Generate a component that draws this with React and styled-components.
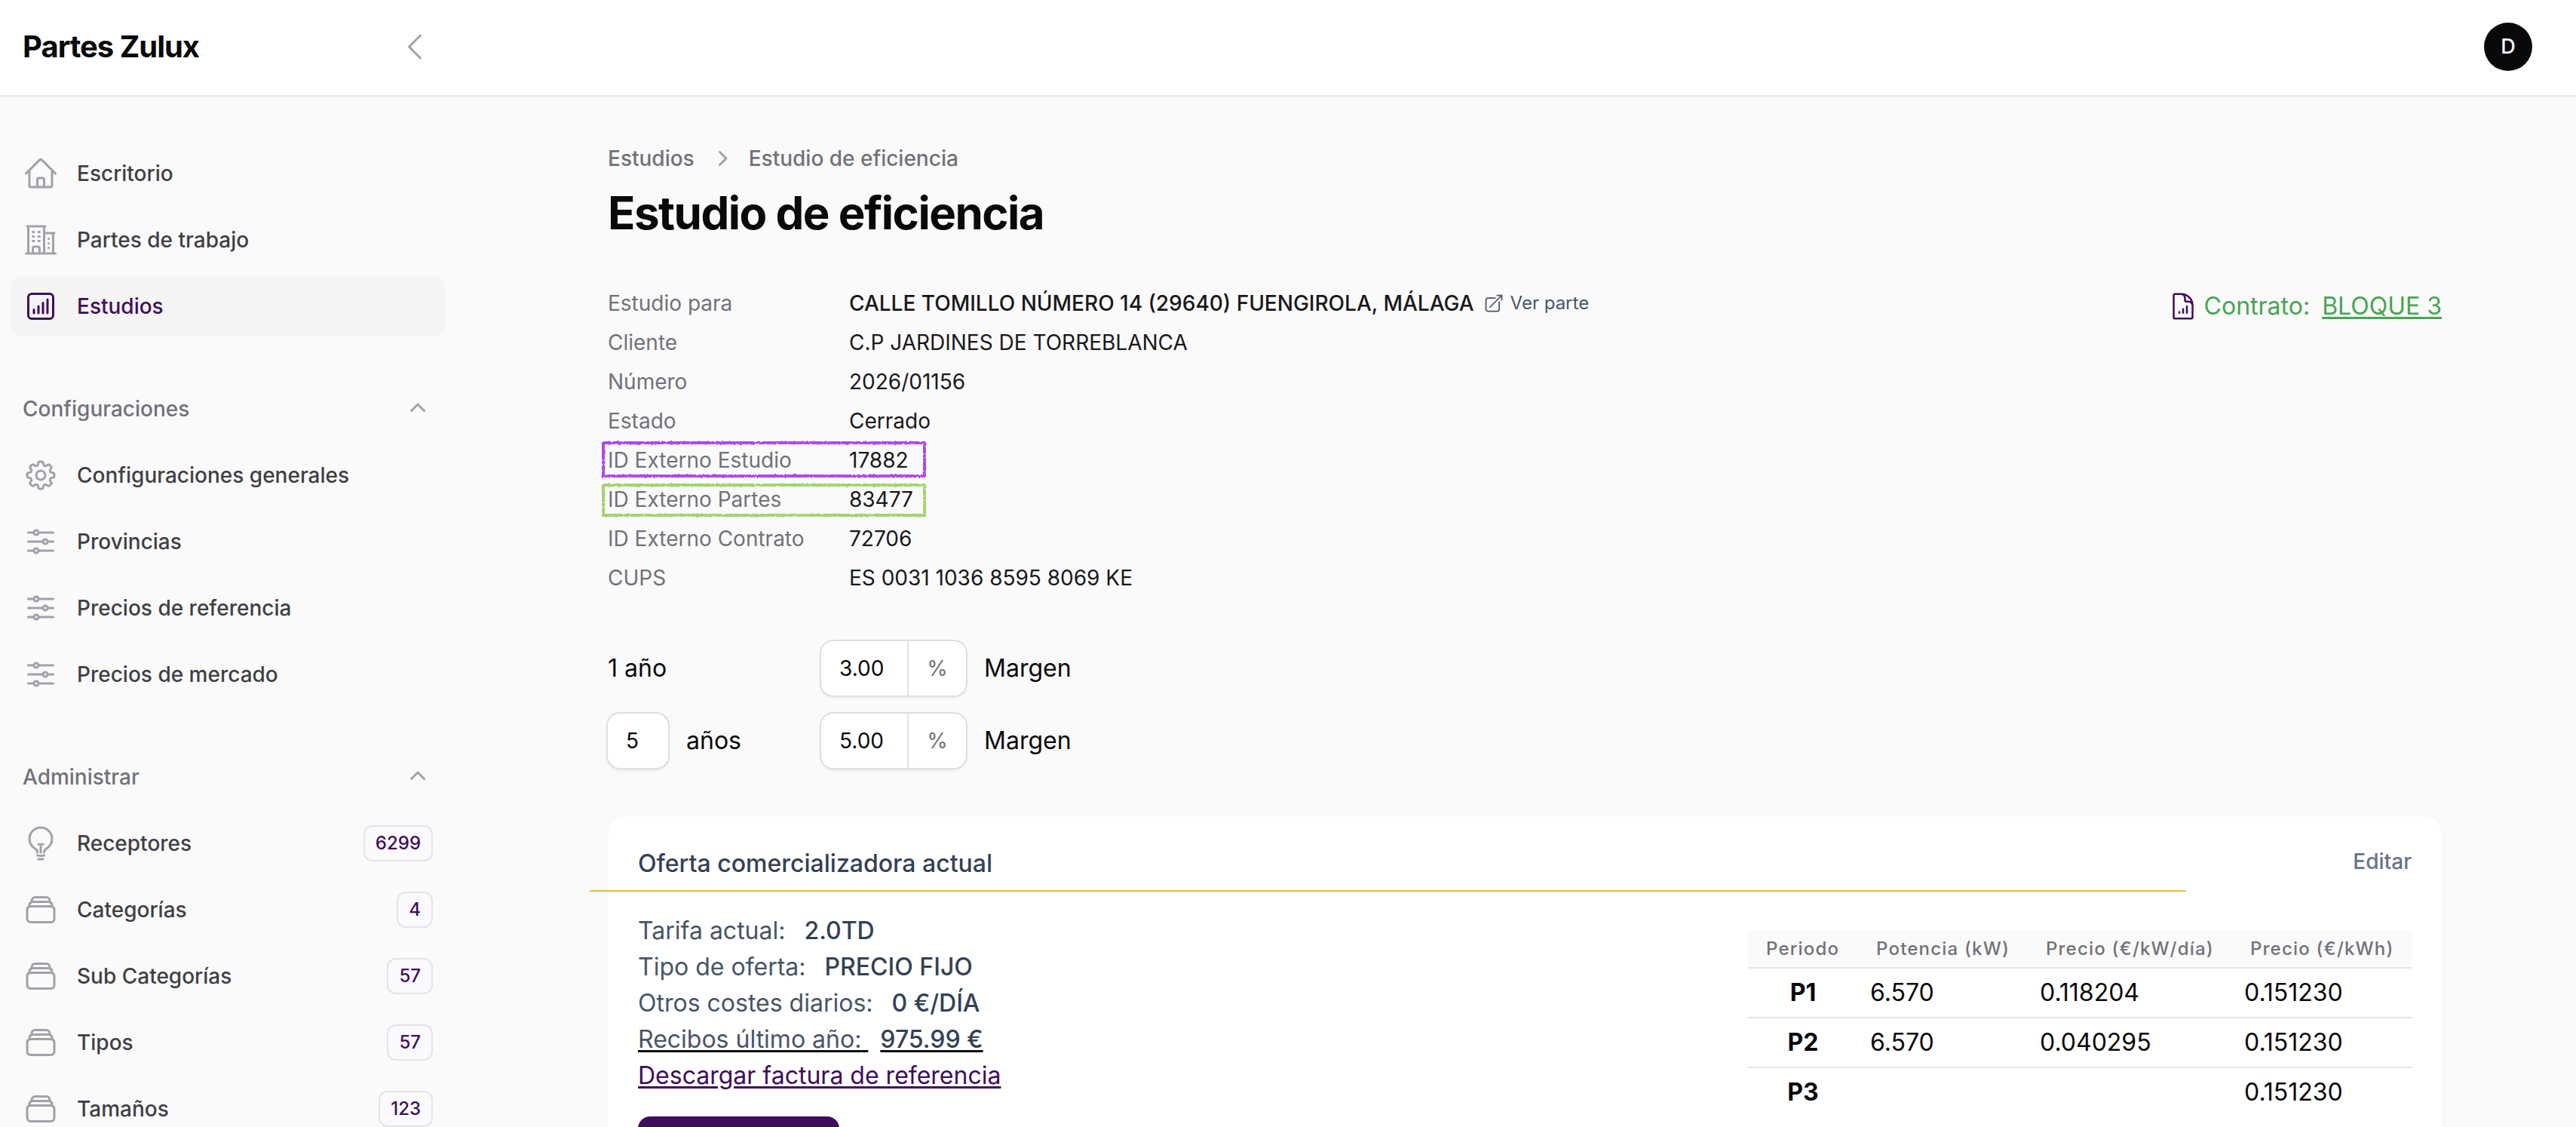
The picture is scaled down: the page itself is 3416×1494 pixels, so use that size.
import React from "react"
import styled, { createGlobalStyle } from "styled-components"
import {
    HiOutlineHome,
    HiOutlineBuildingOffice2,
    HiOutlineChartBarSquare,
    HiOutlineCog8Tooth,
    HiOutlineAdjustmentsHorizontal,
    HiOutlineLightBulb,
    HiOutlineRectangleStack,
    HiOutlineDocumentChartBar,
    HiOutlineArrowTopRightOnSquare,
    HiOutlineChevronLeft,
    HiMiniChevronUp,
    HiMiniChevronRight,
} from "react-icons/hi2"

const GlobalStyle = createGlobalStyle`
    * {
        box-sizing: border-box;
    }

    body {
        margin: 0;
        background: #fafafa;
        color: #09090b;
        font-family: Inter, "Liberation Sans", sans-serif;
        font-size: 32px;
        line-height: 48px;
        overflow: hidden;
    }
`;

const Page = styled.div`
    display: flex;
    flex-direction: column;
    height: 1494px;
    overflow: hidden;
`;

const Topbar = styled.header`
    position: relative;
    display: flex;
    flex: none;
    align-items: center;
    justify-content: space-between;
    height: 126px;
    padding: 0 58px 2px 30px;
    background: #fff;
    box-shadow: 0 0 0 2px #e4e4e5, 0 2px 6px rgba(0, 0, 0, 0.05);
`;

const Brand = styled.div`
    display: flex;
    align-items: center;
    justify-content: space-between;
    width: 544px;
    font-size: 40px;
    font-weight: 700;
    line-height: 40px;
    letter-spacing: -1px;
`;

const CollapseIcon = styled(HiOutlineChevronLeft)`
    width: 48px;
    height: 48px;
    color: #a1a1aa;
`;

const Avatar = styled.div`
    display: flex;
    align-items: center;
    justify-content: center;
    width: 64px;
    height: 64px;
    border-radius: 50%;
    background: #09090b;
    color: #fff;
    font-size: 27px;
    font-weight: 500;
`;

const Body = styled.div`
    display: flex;
    flex: 1;
    min-height: 0;
`;

const Sidebar = styled.nav`
    display: flex;
    flex: none;
    flex-direction: column;
    gap: 56px;
    width: 640px;
    padding: 64px 50px 0 14px;
`;

const Group = styled.div`
    display: flex;
    flex-direction: column;
    gap: 8px;
`;

const GroupHeader = styled.div`
    display: flex;
    align-items: center;
    justify-content: space-between;
    height: 80px;
    padding: 0 16px;
    color: #71717a;
    font-size: 28px;
    font-weight: 500;
`;

const GroupIcon = styled(HiMiniChevronUp)`
    width: 40px;
    height: 40px;
    color: #a1a1aa;
`;

const Item = styled.a`
    display: flex;
    align-items: center;
    gap: 24px;
    height: 80px;
    padding: 0 16px;
    border-radius: 16px;
    background: ${props => props.$active ? "#f4f4f5" : "transparent"};
    color: ${props => props.$active ? "#3f0d5c" : "#3f3f46"};
    font-size: 28px;
    font-weight: 500;

    svg {
        flex: none;
        width: 48px;
        height: 48px;
        color: ${props => props.$active ? "#3f0d5c" : "#a1a1aa"};
    }
`;

const ItemLabel = styled.span`
    flex: 1;
`;

const Badge = styled.span`
    min-width: 48px;
    padding: 8px 16px;
    border-radius: 12px;
    background: #faf9fb;
    box-shadow: inset 0 0 0 2px #e7e1ea;
    color: #3f0d5c;
    font-size: 24px;
    line-height: 32px;
    text-align: center;
`;

const Main = styled.main`
    flex: none;
    width: 2432px;
    margin-left: 166px;
    padding-top: 64px;
`;

const Breadcrumbs = styled.div`
    display: flex;
    align-items: center;
    gap: 16px;
    height: 40px;
    color: #71717a;
    font-size: 28px;
    font-weight: 500;

    svg {
        width: 40px;
        height: 40px;
        color: #a1a1aa;
    }
`;

const Title = styled.h1`
    margin: 16px 0 0;
    font-size: 60px;
    font-weight: 700;
    line-height: 72px;
    letter-spacing: -1.5px;
`;

const Summary = styled.section`
    display: flex;
    justify-content: space-between;
    margin-top: 58px;
`;

const Details = styled.dl`
    margin: 0;
`;

const Detail = styled.div`
    position: relative;
    display: flex;
    align-items: center;
    height: 52px;
    font-size: 28px;
    line-height: 40px;
`;

const Term = styled.dt`
    width: 320px;
    color: #71717a;
`;

const Value = styled.dd`
    margin: 0;
    color: #18181b;
    font-weight: ${props => props.$strong ? 500 : 400};
`;

const ViewLink = styled.a`
    display: flex;
    align-items: center;
    gap: 8px;
    margin-left: 12px;
    color: #475569;
    font-size: 24px;

    svg {
        width: 28px;
        height: 28px;
    }
`;

const MarkerFrame = styled.svg`
    position: absolute;
    top: ${props => props.$top}px;
    left: -8px;
    overflow: visible;
`;

const Contract = styled.div`
    display: flex;
    align-items: center;
    height: 48px;
    margin-top: 6px;
    color: #48a452;

    svg {
        width: 40px;
        height: 40px;
        margin-right: 8px;
        color: #3f0d5c;
    }
`;

const ContractLink = styled.a`
    margin-left: 16px;
    text-decoration: underline 3px;
    text-underline-offset: 3px;
`;

const Margins = styled.section`
    display: flex;
    flex-direction: column;
    gap: 20px;
    margin-top: 56px;
`;

const MarginRow = styled.div`
    display: flex;
    align-items: center;
    height: 76px;
`;

const Years = styled.div`
    display: flex;
    align-items: center;
    gap: 24px;
    width: 283px;
`;

const Field = styled.div`
    display: flex;
    width: ${props => props.$width}px;
    height: 72px;
    border-radius: 16px;
    background: #fff;
    box-shadow: 0 0 0 2px #dfdfe0, 0 3px 5px rgba(0, 0, 0, 0.08);
    font-size: 28px;
    line-height: 72px;
`;

const FieldValue = styled.span`
    flex: 1;
    padding-left: 24px;
`;

const FieldSuffix = styled.span`
    width: 78px;
    border-left: 2px solid #e4e4e7;
    color: #71717a;
    text-align: center;
`;

const MarginLabel = styled.span`
    margin-left: 24px;
`;

const Card = styled.section`
    height: 560px;
    margin-top: 62px;
    padding: 44px 40px;
    border-radius: 24px;
    background: #fff;
    box-shadow: 0 0 2px rgba(0, 0, 0, 0.05);
`;

const CardHeader = styled.div`
    display: flex;
    justify-content: space-between;
    height: 56px;
`;

const CardTitle = styled.h2`
    margin: 0;
    width: 2117px;
    margin-left: -64px;
    padding-left: 64px;
    border-bottom: 2px solid #f0b440;
    color: #334155;
    font-size: 32px;
    font-weight: 500;
    line-height: 38px;
`;

const EditLink = styled.a`
    color: #64748b;
    font-size: 28px;
    font-weight: 500;
    line-height: 32px;
`;

const CardBody = styled.div`
    display: flex;
    justify-content: space-between;
    margin-top: 28px;
`;

const OfferLine = styled.div`
    color: #475569;
    white-space: pre;
    text-decoration: ${props => props.$underline ? "underline 3px #09090b" : "none"};
    text-underline-offset: 3px;
`;

const OfferValue = styled.span`
    display: inline-block;
    margin-left: 16px;
    color: #334155;
    font-weight: 500;
    text-decoration: inherit;
`;

const DownloadLink = styled.a`
    color: #3f0d5c;
    text-decoration: underline 3px;
    text-underline-offset: 3px;
`;

const PrimaryButton = styled.div`
    width: 267px;
    height: 72px;
    margin-top: 30px;
    border-radius: 16px;
    background: #3f0d5c;
`;

const Prices = styled.table`
    width: 880px;
    height: max-content;
    margin-top: 24px;
    border-collapse: separate;
    border-spacing: 0;
    table-layout: fixed;
`;

const HeadCell = styled.th`
    width: ${props => props.$width}px;
    height: 50px;
    padding: 0 0 0 24px;
    border-bottom: 2px solid #e4e4e5;
    background: #fafafa;
    color: #71717a;
    font-size: 24px;
    font-weight: 500;
    line-height: 46px;
    letter-spacing: 1.2px;
    text-align: left;
    white-space: nowrap;
`;

const Cell = styled.td`
    height: 66px;
    padding: 0 0 0 16px;
    border-bottom: 2px solid #e4e4e5;
    line-height: 64px;

    tr:last-child > & {
        border-bottom-color: transparent;
    }
`;

const PeriodCell = styled(Cell)`
    padding: 0;
    font-weight: 700;
    text-align: center;
`;

const menu = [
    {
        items: [
            { icon: HiOutlineHome, label: "Escritorio" },
            { icon: HiOutlineBuildingOffice2, label: "Partes de trabajo" },
            { icon: HiOutlineChartBarSquare, label: "Estudios", active: true },
        ],
    },
    {
        title: "Configuraciones",
        items: [
            { icon: HiOutlineCog8Tooth, label: "Configuraciones generales" },
            { icon: HiOutlineAdjustmentsHorizontal, label: "Provincias" },
            { icon: HiOutlineAdjustmentsHorizontal, label: "Precios de referencia" },
            { icon: HiOutlineAdjustmentsHorizontal, label: "Precios de mercado" },
        ],
    },
    {
        title: "Administrar",
        items: [
            { icon: HiOutlineLightBulb, label: "Receptores", badge: 6299 },
            { icon: HiOutlineRectangleStack, label: "Categorías", badge: 4 },
            { icon: HiOutlineRectangleStack, label: "Sub Categorías", badge: 57 },
            { icon: HiOutlineRectangleStack, label: "Tipos", badge: 57 },
            { icon: HiOutlineRectangleStack, label: "Tamaños", badge: 123 },
        ],
    },
];

const details = [
    { term: "Estudio para", value: "CALLE TOMILLO NÚMERO 14 (29640) FUENGIROLA, MÁLAGA", strong: true, link: "Ver parte" },
    { term: "Cliente", value: "C.P JARDINES DE TORREBLANCA" },
    { term: "Número", value: "2026/01156" },
    { term: "Estado", value: "Cerrado" },
    { term: "ID Externo Estudio", value: "17882", marker: { id: "study", color: "#b04af0", top: 1, height: 48 } },
    { term: "ID Externo Partes", value: "83477", marker: { id: "parts", color: "#a3d470", top: 5, height: 44 } },
    { term: "ID Externo Contrato", value: "72706" },
    { term: "CUPS", value: "ES 0031 1036 8595 8069 KE" },
];

const offer = [
    { label: "Tarifa actual:", value: "2.0TD" },
    { label: "Tipo de oferta:", value: "PRECIO FIJO" },
    { label: "Otros costes diarios:", value: "0 €/DÍA" },
    { label: "Recibos último año:", value: "975.99 €", underline: true },
];

const prices = [
    ["P1", "6.570", "0.118204", "0.151230"],
    ["P2", "6.570", "0.040295", "0.151230"],
    ["P3", "", "", "0.151230"],
];

// crayon-like frame around a detail row
const Marker = ({ id, color, top, height }) => (
    <MarkerFrame $top={top} width="430" height={height}>
        <filter id={id} filterUnits="userSpaceOnUse" x="-6" y="-6" width="442" height={height + 12}>
            <feTurbulence type="fractalNoise" baseFrequency="0.35" numOctaves="2" />
            <feDisplacementMap in="SourceGraphic" scale="3" xChannelSelector="R" yChannelSelector="G" />
        </filter>
        <rect
            x="2"
            y="2"
            width="426"
            height={height - 4}
            fill="none"
            stroke={color}
            strokeWidth="4"
            filter={`url(#${id})`}
        />
    </MarkerFrame>
)

const Navigation = () => (
    <Sidebar>
        {menu.map((group, index) => (
            <Group key={index}>
                {group.title && (
                    <GroupHeader>
                        {group.title}
                        <GroupIcon />
                    </GroupHeader>
                )}
                {group.items.map(({ icon: Icon, label, active, badge }) => (
                    <Item key={label} $active={active}>
                        <Icon />
                        <ItemLabel>{label}</ItemLabel>
                        {badge && <Badge>{badge}</Badge>}
                    </Item>
                ))}
            </Group>
        ))}
    </Sidebar>
)

const MarginField = ({ value }) => (
    <>
        <Field $width={192}>
            <FieldValue>{value}</FieldValue>
            <FieldSuffix>%</FieldSuffix>
        </Field>
        <MarginLabel>Margen</MarginLabel>
    </>
)

const CurrentOffer = () => (
    <Card>
        <CardHeader>
            <CardTitle>Oferta comercializadora actual</CardTitle>
            <EditLink>Editar</EditLink>
        </CardHeader>
        <CardBody>
            <div>
                {offer.map(({ label, value, underline }) => (
                    <OfferLine key={label} $underline={underline}>
                        {label}{" "}
                        <OfferValue>{value}</OfferValue>
                    </OfferLine>
                ))}
                <DownloadLink>Descargar factura de referencia</DownloadLink>
                <PrimaryButton />
            </div>
            <Prices>
                <thead>
                    <tr>
                        <HeadCell $width={146}>Periodo</HeadCell>
                        <HeadCell $width={225}>Potencia (kW)</HeadCell>
                        <HeadCell $width={271}>Precio (€/kW/día)</HeadCell>
                        <HeadCell $width={238}>Precio (€/kWh)</HeadCell>
                    </tr>
                </thead>
                <tbody>
                    {prices.map(([period, ...values]) => (
                        <tr key={period}>
                            <PeriodCell>{period}</PeriodCell>
                            {values.map((value, index) => <Cell key={index}>{value}</Cell>)}
                        </tr>
                    ))}
                </tbody>
            </Prices>
        </CardBody>
    </Card>
)

const App = () => {
    return (
        <Page>
            <GlobalStyle />
            <Topbar>
                <Brand>
                    Partes Zulux
                    <CollapseIcon />
                </Brand>
                <Avatar>D</Avatar>
            </Topbar>
            <Body>
                <Navigation />
                <Main>
                    <Breadcrumbs>
                        Estudios
                        <HiMiniChevronRight />
                        Estudio de eficiencia
                    </Breadcrumbs>
                    <Title>Estudio de eficiencia</Title>
                    <Summary>
                        <Details>
                            {details.map(({ term, value, strong, link, marker }) => (
                                <Detail key={term}>
                                    <Term>{term}</Term>
                                    <Value $strong={strong}>{value}</Value>
                                    {link && (
                                        <ViewLink>
                                            <HiOutlineArrowTopRightOnSquare />
                                            {link}
                                        </ViewLink>
                                    )}
                                    {marker && <Marker {...marker} />}
                                </Detail>
                            ))}
                        </Details>
                        <Contract>
                            <HiOutlineDocumentChartBar />
                            Contrato:
                            <ContractLink>BLOQUE 3</ContractLink>
                        </Contract>
                    </Summary>
                    <Margins>
                        <MarginRow>
                            <Years>1 año</Years>
                            <MarginField value="3.00" />
                        </MarginRow>
                        <MarginRow>
                            <Years>
                                <Field $width={80}>
                                    <FieldValue>5</FieldValue>
                                </Field>
                                años
                            </Years>
                            <MarginField value="5.00" />
                        </MarginRow>
                    </Margins>
                    <CurrentOffer />
                </Main>
            </Body>
        </Page>
    )
}

export default App;
